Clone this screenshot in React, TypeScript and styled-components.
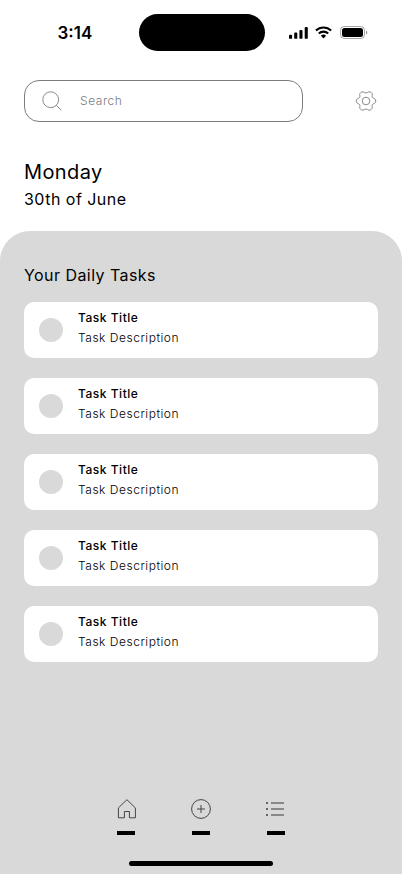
import React from 'react';
import styled, { createGlobalStyle } from 'styled-components';

const GlobalStyle = createGlobalStyle`
  * { box-sizing: border-box; }
  body { margin: 0; background: #fff; font-family: Inter, "Liberation Sans", sans-serif; }
  svg { display: block; }
`;

const Screen = styled.div`
  width: 402px;
  height: 874px;
  display: flex;
  flex-direction: column;
  overflow: hidden;
  background: #fff;
  color: #000;
`;

const StatusBar = styled.header`
  height: 80px;
  flex: none;
  display: grid;
  grid-template-columns: 138.5px 126px 1fr;
  align-items: start;
  padding-top: 14px;
`;

const Clock = styled.time`
  padding: 8px 0 0 57.5px;
  font-size: 17px;
  line-height: 22px;
  font-weight: 600;
`;

const Island = styled.div`
  height: 36.5px;
  border-radius: 19px;
  background: #000;
`;

const StatusIcons = styled.div`
  display: flex;
  align-items: center;
  gap: 7px;
  padding: 12px 0 0 24.5px;
`;

const SignalIconBox = styled.svg`
  width: 19px;
  height: 12px;
`;

const SearchRow = styled.div`
  flex: none;
  display: flex;
  align-items: center;
  justify-content: space-between;
  padding: 0 25px 0 24px;
`;

const SearchBox = styled.label`
  width: 279px;
  height: 42px;
  display: flex;
  align-items: center;
  gap: 18px;
  padding-left: 17px;
  border: 1px solid #7c7c7c;
  border-radius: 15px;
`;

const SearchHint = styled.span`
  font-size: 12px;
  line-height: 16px;
  letter-spacing: 0.55px;
  font-weight: 300;
  color: #7c7c7c;
`;

const DateBlock = styled.section`
  flex: none;
  height: 109px;
  padding: 38px 24px 0;
`;

const DayName = styled.h1`
  margin: 0;
  font-size: 20px;
  line-height: 24px;
  font-weight: 400;
  letter-spacing: 0.4px;
`;

const DayDate = styled.p`
  margin: 5px 0 0;
  font-size: 16px;
  line-height: 20px;
  letter-spacing: 0.48px;
`;

const Panel = styled.main`
  flex: 1;
  display: flex;
  flex-direction: column;
  padding: 34px 24px 8px;
  border-radius: 30px 30px 0 0;
  background: #d9d9d9;
`;

const PanelTitle = styled.h2`
  margin: 0 0 17px;
  font-size: 16px;
  line-height: 20px;
  font-weight: 400;
  letter-spacing: 0.44px;
`;

const TaskList = styled.ul`
  margin: 0;
  padding: 0;
  list-style: none;
  display: flex;
  flex-direction: column;
  gap: 20px;
`;

const TaskCard = styled.li`
  height: 56px;
  display: flex;
  align-items: center;
  gap: 15px;
  padding-left: 15px;
  border-radius: 10px;
  background: #fff;
`;

const TaskCheck = styled.span`
  width: 24px;
  height: 24px;
  border-radius: 50%;
  background: #d9d9d9;
`;

const TaskText = styled.div`
  display: flex;
  flex-direction: column;
  padding-bottom: 4px;
`;

const TaskLine = styled.span<{ $weight: number }>`
  font-size: 12px;
  line-height: 20px;
  letter-spacing: 0.52px;
  font-weight: ${(p) => p.$weight};
`;

const NavBar = styled.nav`
  display: flex;
  justify-content: center;
  gap: 57px;
  margin-top: auto;
`;

const NavItem = styled.div`
  width: 18px;
  display: flex;
  flex-direction: column;
  align-items: center;
  gap: 11px;
`;

const NavMark = styled.span`
  width: 18px;
  height: 4px;
  background: #000;
`;

const HomeIndicator = styled.div`
  width: 144px;
  height: 5px;
  margin: 26px auto 0;
  border-radius: 3px;
  background: #000;
`;

const SignalIcon = () => (
  <SignalIconBox viewBox="0 0 19 12">
    <rect x="0" y="7.7" width="3.1" height="4.1" rx="0.9" />
    <rect x="5.2" y="5.6" width="3.1" height="6.2" rx="0.9" />
    <rect x="10.4" y="3" width="3.1" height="8.8" rx="0.9" />
    <rect x="15.7" y="0" width="3.1" height="11.8" rx="0.9" />
  </SignalIconBox>
);

const WifiIcon = () => (
  <svg width="17" height="13" viewBox="0 0 17 13">
    <g fill="none" stroke="#000" strokeWidth="2.1">
      <path d="M0.9 4.6a11 11 0 0 1 15.2 0" />
      <path d="M3.8 7.5a6.9 6.9 0 0 1 9.4 0" />
    </g>
    <path d="M8.5 12.4l-2.6-2.7a3.8 3.8 0 0 1 5.2 0z" />
  </svg>
);

const BatteryIcon = () => (
  <svg width="29" height="13" viewBox="-1 0 29 13">
    <rect x="0.5" y="0.5" width="24" height="12" rx="3.8" fill="none" stroke="#000" strokeOpacity="0.35" />
    <rect x="2" y="2" width="21" height="9" rx="2.5" />
    <path d="M26 4.5v4c0.8-.3 1.3-1.1 1.3-2s-.5-1.7-1.3-2z" fillOpacity="0.4" />
  </svg>
);

const SearchIcon = () => (
  <svg width="20" height="20" viewBox="0 0 20 20" fill="none" stroke="#7c7c7c" strokeWidth="0.9">
    <circle cx="8.7" cy="8.7" r="7.9" />
    <path d="M14.3 14.3l5 5" />
  </svg>
);

const SettingsIcon = () => (
  <svg width="22" height="22" viewBox="0 0 22 22" fill="none" stroke="#7c7c7c" strokeWidth="0.9" strokeLinejoin="round">
    <path d="M11 3.1C12 3.1 12.8 1.8 14 1.8C15.6 1.8 17.3 2.9 17.3 4.5C17.3 5.6 16.8 6.2 17.3 7.3C17.9 8.4 20.8 8.4 20.8 11C20.8 13.6 17.9 13.6 17.3 14.7C16.8 15.8 17.3 16.4 17.3 17.5C17.3 19.1 15.6 20.2 14 20.2C12.8 20.2 12 18.9 11 18.9C10 18.9 9.2 20.2 8 20.2C6.4 20.2 4.7 19.1 4.7 17.5C4.7 16.4 5.2 15.8 4.7 14.7C4.1 13.6 1.2 13.6 1.2 11C1.2 8.4 4.1 8.4 4.7 7.3C5.2 6.2 4.7 5.6 4.7 4.5C4.7 2.9 6.4 1.8 8 1.8C9.2 1.8 10 3.1 11 3.1z" />
    <circle cx="11" cy="11" r="3.8" />
  </svg>
);

const HomeIcon = () => (
  <svg width="22" height="22" viewBox="0 0 22 22" fill="none" stroke="#444">
    <path d="M3.4 19.8V9.9L11.9 1.7L20.4 9.9V19.8H14.4V13.5H9.4V19.8z" strokeLinejoin="round" />
  </svg>
);

const AddIcon = () => (
  <svg width="22" height="22" viewBox="0 0 22 22" fill="none" stroke="#444">
    <circle cx="11" cy="11" r="9.4" />
    <path d="M11 7v8M7 11h8" />
  </svg>
);

const ListIcon = () => (
  <svg width="22" height="22" viewBox="0 0 22 22" fill="none">
    <path d="M6 5h13M6 11h13M6 17h13" stroke="#888" strokeWidth="1.8" />
    <path d="M1 5h2M1 11h2M1 17h2" stroke="#666" strokeWidth="1.8" />
  </svg>
);

const tasks = Array.from({ length: 5 }, (_, id) => ({
  id,
  title: 'Task Title',
  description: 'Task Description',
}));

const navIcons = [HomeIcon, AddIcon, ListIcon];

export default function App() {
  return (
    <Screen>
      <GlobalStyle />
      <StatusBar>
        <Clock>3:14</Clock>
        <Island />
        <StatusIcons>
          <SignalIcon />
          <WifiIcon />
          <BatteryIcon />
        </StatusIcons>
      </StatusBar>
      <SearchRow>
        <SearchBox>
          <SearchIcon />
          <SearchHint>Search</SearchHint>
        </SearchBox>
        <SettingsIcon />
      </SearchRow>
      <DateBlock>
        <DayName>Monday</DayName>
        <DayDate>30th of June</DayDate>
      </DateBlock>
      <Panel>
        <PanelTitle>Your Daily Tasks</PanelTitle>
        <TaskList>
          {tasks.map((task) => (
            <TaskCard key={task.id}>
              <TaskCheck />
              <TaskText>
                <TaskLine $weight={500}>{task.title}</TaskLine>
                <TaskLine $weight={300}>{task.description}</TaskLine>
              </TaskText>
            </TaskCard>
          ))}
        </TaskList>
        <NavBar>
          {navIcons.map((Icon, i) => (
            <NavItem key={i}>
              <Icon />
              <NavMark />
            </NavItem>
          ))}
        </NavBar>
        <HomeIndicator />
      </Panel>
    </Screen>
  );
}
